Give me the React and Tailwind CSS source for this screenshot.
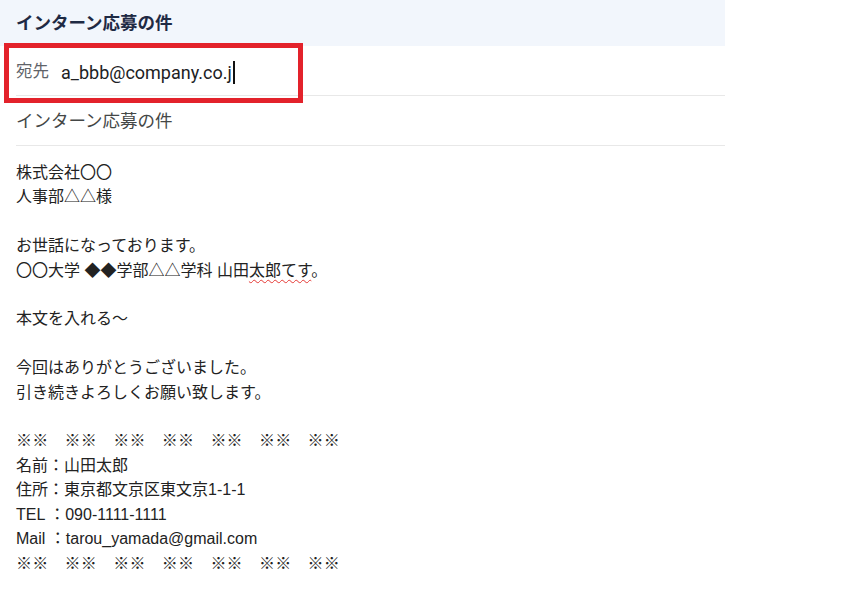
import React from 'react';

const sans = { fontFamily: '"Roboto", "Noto Sans CJK JP", sans-serif' };

const Stars = () => <div>※※　※※　※※　※※　※※　※※　※※</div>;

const App = () => {
    return (
        <div className="w-[860px] h-[607px] bg-white relative overflow-hidden">
            <div className="w-[725px]">
                {/* header */}
                <div className="h-[46px] bg-[#f2f6fc] px-4 flex items-center">
                    <span className="text-[17.5px] font-bold text-[#1f2a44]" style={sans}>インターン応募の件</span>
                </div>

                {/* recipient */}
                <div className="ml-4 h-[50px] pt-[4px] border-b border-[#e8e8e8] flex items-center gap-3" style={sans}>
                    <span className="text-[16.5px] text-[#5f6368]">宛先</span>
                    <span className="text-[18px] text-[#202124] flex items-center">
                        a_bbb@company.co.j
                        <span className="inline-block w-[2px] h-[23px] bg-[#111] ml-[1px]" />
                    </span>
                </div>

                {/* subject */}
                <div className="ml-4 h-[50px] pt-[2px] border-b border-[#e8e8e8] flex items-center" style={sans}>
                    <span className="text-[17.5px] text-[#444746]">インターン応募の件</span>
                </div>

                {/* body */}
                <div className="px-4 pt-[15px] text-[16px] leading-[24.4px] text-[#222]" style={{ fontFamily: '"Liberation Sans", "Noto Sans CJK JP", sans-serif' }}>
                    <div>株式会社〇〇</div>
                    <div>人事部△△様</div>
                    <div>&nbsp;</div>
                    <div>お世話になっております。</div>
                    <div>
                        〇〇大学 ◆◆学部△△学科 山田
                        <span className="underline decoration-wavy decoration-[#e53935] decoration-1 underline-offset-[3px]">太郎てす</span>。
                    </div>
                    <div>&nbsp;</div>
                    <div>本文を入れる～</div>
                    <div>&nbsp;</div>
                    <div>今回はありがとうございました。</div>
                    <div>引き続きよろしくお願い致します。</div>
                    <div>&nbsp;</div>
                    <div className="tracking-[0.2px]"><Stars /></div>
                    <div>名前：山田太郎</div>
                    <div>住所：東京都文京区東文京1-1-1</div>
                    <div>TEL ：090-1111-1111</div>
                    <div>Mail ：tarou_yamada@gmail.com</div>
                    <div className="tracking-[0.2px]"><Stars /></div>
                </div>
            </div>

            {/* annotation box */}
            <div className="absolute left-[4px] top-[43px] w-[299px] h-[60px] border-[5px] border-[#e3222b]" />
        </div>
    );
};

export default App;
